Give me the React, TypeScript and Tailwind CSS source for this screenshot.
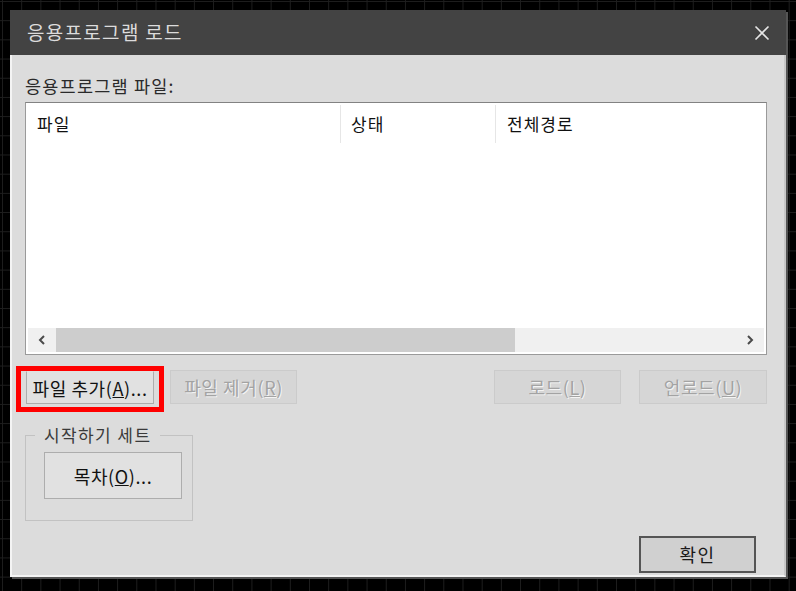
import React from "react";

const font = "font-['Noto_Sans_CJK_KR','Noto_Sans',sans-serif]";

function WinButton({
  children,
  disabled,
  className = "",
}: {
  children: React.ReactNode;
  disabled?: boolean;
  className?: string;
}) {
  return (
    <div
      className={
        "flex shrink-0 items-center justify-center text-[18px] leading-none tracking-[0.6px] " +
        (disabled
          ? "border border-[#cbcbcb] bg-[#d6d6d6] text-[#a3a3a3] [text-shadow:1px_1px_0_#f4f4f4] "
          : "border border-[#adadad] bg-[#e1e1e1] text-[#111] ") +
        className
      }
    >
      {children}
    </div>
  );
}

export default function App() {
  return (
    <div
      className={`${font} h-[591px] w-[796px] bg-black bg-[linear-gradient(#1e1e1e_1px,transparent_1px),linear-gradient(90deg,#1e1e1e_1px,transparent_1px)] bg-[size:19.2px_19.2px] bg-[position:2px_1px] p-[10px]`}
    >
      <div className="flex h-[567px] w-[776px] flex-col shadow-[2px_2px_0_#555]">
        {/* title */}
        <div className="flex h-[45px] shrink-0 items-center justify-between bg-[#434343] pl-[17px] pr-[16px]">
          <span className="text-[19px] tracking-[1.3px] text-[#dcdcdc]">
            응용프로그램 로드
          </span>
          <svg width="16" height="16" viewBox="0 0 16 16">
            <path
              d="M1.5 1.5 L14.5 14.5 M14.5 1.5 L1.5 14.5"
              stroke="#e6e6e6"
              strokeWidth="1.6"
            />
          </svg>
        </div>

        {/* body */}
        <div className="flex flex-1 flex-col border-b-2 border-l-2 border-r-2 border-b-[#f4f4f4] border-l-[#f4f4f4] border-r-[#c8c8c8] bg-[#dcdcdc] pl-[13px] pr-[17px] pt-[21px]">
          <div className="h-[20px] shrink-0 text-[17.5px] leading-[20px] tracking-[1.2px] text-[#2a2a2a]">
            응용프로그램 파일:
          </div>

          {/* list */}
          <div className="mt-[6px] flex h-[253px] w-[742px] shrink-0 flex-col border border-[#9a9a9a] border-t-[#828282] bg-white p-[2px]">
            <div className="flex h-[38px] text-[17px] tracking-[1px] text-[#111]">
              <div className="flex w-[312px] items-center pl-[9px]">파일</div>
              <div className="flex w-[155px] items-center border-l border-[#e6e6e6] pl-[10px]">
                상태
              </div>
              <div className="flex flex-1 items-center border-l border-[#e6e6e6] pl-[11px]">
                전체경로
              </div>
            </div>
            <div className="flex-1" />
            <div className="flex h-[24px] items-center bg-[#f0f0f0]">
              <div className="flex w-[28px] items-center justify-center">
                <svg width="10" height="10" viewBox="0 0 10 10">
                  <path d="M7 1 L3 5 L7 9" stroke="#4a4a4a" strokeWidth="2" fill="none" />
                </svg>
              </div>
              <div className="h-[24px] w-[459px] bg-[#cdcdcd]" />
              <div className="flex-1" />
              <div className="flex w-[28px] items-center justify-center">
                <svg width="10" height="10" viewBox="0 0 10 10">
                  <path d="M3 1 L7 5 L3 9" stroke="#4a4a4a" strokeWidth="2" fill="none" />
                </svg>
              </div>
            </div>
          </div>

          {/* buttons */}
          <div className="mt-[11px] flex shrink-0 items-start">
            <div className="-ml-[9px] border-[5px] border-[#ff0000] pb-[3px] pl-[5px] pr-[5px]">
              <WinButton className="h-[33px] w-[128px] border-[#8a8a8a] border-t-[#e1e1e1]">
                <span>
                  파일 추가(<u>A</u>)...
                </span>
              </WinButton>
            </div>
            <WinButton disabled className="ml-[6px] mt-[4px] h-[34px] w-[127px]">
              <span>
                파일 제거(<u>R</u>)
              </span>
            </WinButton>
            <div className="flex-1" />
            <WinButton disabled className="mt-[4px] h-[34px] w-[127px]">
              <span>
                로드(<u>L</u>)
              </span>
            </WinButton>
            <WinButton disabled className="ml-[18px] mt-[4px] h-[34px] w-[128px]">
              <span>
                언로드(<u>U</u>)
              </span>
            </WinButton>
          </div>

          {/* group box */}
          <fieldset className="mt-[13px] h-[96px] w-[168px] shrink-0 border border-[#c2c2c2] pl-[18px]">
            <legend className="-ml-[9px] px-[9px] text-[17px] leading-[20px] tracking-[1.4px] text-[#3a3a3a]">
              시작하기 세트
            </legend>
            <WinButton className="mt-[7px] h-[47px] w-[138px] border-[#7a7a7a]">
              <span>
                목차(<u>O</u>)...
              </span>
            </WinButton>
          </fieldset>

          <div className="mt-[15px] flex shrink-0 justify-end pr-[11px]">
            <div className="flex h-[37px] w-[117px] items-center justify-center border-2 border-[#555] bg-[#d0d0d0] text-[18px] tracking-[1.5px] text-[#1a1a1a]">
              확인
            </div>
          </div>
        </div>
      </div>
    </div>
  );
}
